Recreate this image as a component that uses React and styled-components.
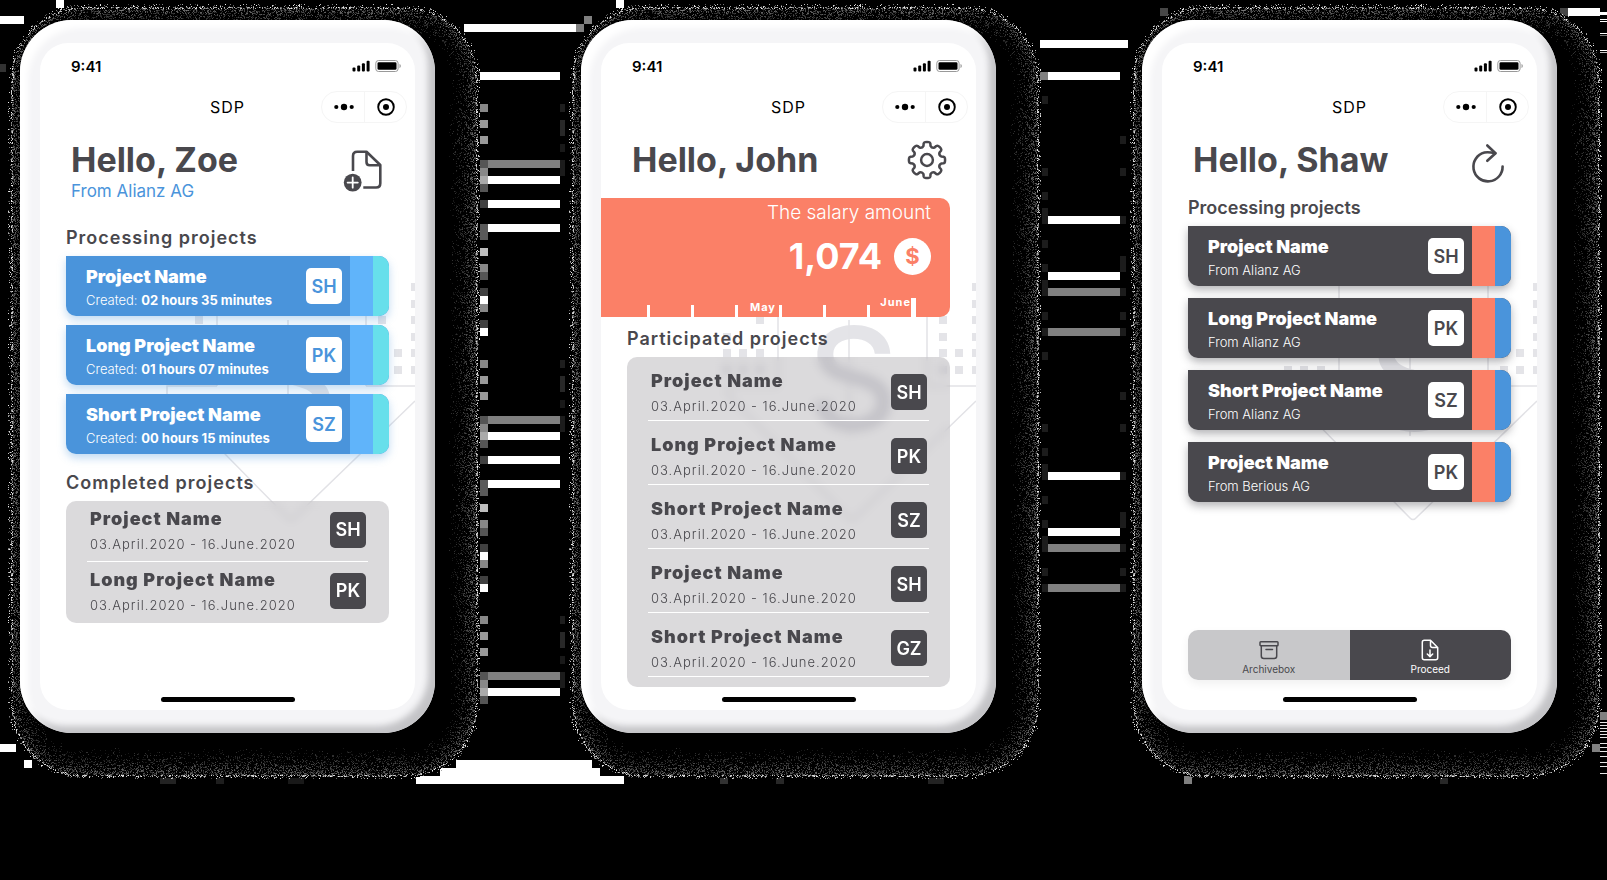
import React from "react";
import styled, { createGlobalStyle } from "styled-components";

const ink = "#49484d";
const blue = "#4a94db";
const coral = "#fb8067";

const GlobalStyle = createGlobalStyle`
  *, *::before, *::after { box-sizing: border-box; }
  html { background: #000; }
  body {
    margin: 0;
    min-height: 100vh;
    background: #000;
    color: ${ink};
    font-family: Inter, "Liberation Sans", sans-serif;
    -webkit-font-smoothing: antialiased;
  }
  h1, h2, h3, p, ul { margin: 0; padding: 0; }
  ul { list-style: none; }
  button { font: inherit; color: inherit; border: 0; padding: 0; background: none; cursor: pointer; }
  svg { display: block; }
`;

/* ---------- Page ---------- */

const Page = styled.main`
  position: relative;
  min-height: 100vh;
  overflow: hidden;
`;

const Backdrop = styled.svg`
  position: absolute;
  top: 0;
  left: 0;
  width: 100%;
  height: auto;
`;

const Phones = styled.div`
  position: relative;
  display: grid;
  grid-template-columns: repeat(3, 1fr);
  gap: 146px;
  padding: 20px 50px 40px 20px;
`;

const Frame = styled.section`
  padding: 23px 20px;
  border-radius: 52px;
  background: #f5f5f7;
  box-shadow: inset 8px 8px 6px #fff, inset -7px -7px 6px #c4c4c7;
`;

const Screen = styled.div`
  position: relative;
  display: flex;
  flex-direction: column;
  min-height: 667px;
  border-radius: 28px;
  background: #fff;
  overflow: hidden;
`;

const Watermark = styled.svg`
  position: absolute;
  top: 0;
  right: 0;
`;

/* ---------- Status and navigation ---------- */

const StatusBar = styled.div`
  display: flex;
  align-items: center;
  justify-content: space-between;
  height: 46px;
  padding: 0 13px 0 31px;
  color: #000;
  font-size: 15px;
  font-weight: 600;
`;

const NavBar = styled.div`
  display: grid;
  grid-template-columns: 1fr auto 1fr;
  align-items: center;
  height: 36px;
  padding: 0 8px;
  color: #000;
  font-size: 16px;
  letter-spacing: 1px;
`;

const Capsule = styled.div`
  grid-column: 3;
  justify-self: end;
  display: flex;
  width: 86px;
  height: 32px;
  border: 1px solid #f5f5f5;
  border-radius: 16px;
`;

const CapsuleButton = styled.button`
  flex: 1;
  display: grid;
  place-items: center;
  padding-left: 2px;
  & + & { border-left: 1px solid #f5f5f5; }
`;

const NavTitle = styled.p`
  grid-column: 2;
`;

const Header = styled.header`
  position: relative;
  display: flex;
  justify-content: space-between;
  align-items: flex-start;
  padding: 14px 27px 0 31px;
`;

const Greeting = styled.h1`
  font-size: 34px;
  line-height: 42px;
  font-weight: 700;
`;

const Company = styled.p`
  font-size: 17px;
  line-height: 20px;
  color: ${blue};
`;

const HeaderButton = styled.button`
  width: 44px;
  svg { overflow: visible; }
`;

const Content = styled.div`
  position: relative;
  flex: 1;
  display: flex;
  flex-direction: column;
  padding: ${(p) => p.$top}px 26px 0;
`;

const SectionTitle = styled.h2`
  margin-top: ${(p) => p.$space || 0}px;
  margin-bottom: 6px;
  font-size: 18px;
  line-height: 24px;
  font-weight: 600;
  letter-spacing: ${(p) => (p.$tracked ? 1 : 0)}px;
`;

const HomeIndicator = styled.div`
  align-self: center;
  width: 134px;
  height: 5px;
  margin: 10px 0 8px;
  border-radius: 3px;
  background: #000;
`;

/* ---------- Cards ---------- */

const CardList = styled.ul`
  display: grid;
  gap: ${(p) => p.$gap}px;
`;

const tones = {
  blue: { base: blue, first: "#60b4fa", second: "#67dfeb", shadow: "rgba(74,148,219,0.35)" },
  dark: { base: ink, first: coral, second: blue, shadow: "rgba(40,40,50,0.35)" },
};

const CardShell = styled.li`
  display: flex;
  align-items: center;
  height: 60px;
  padding-left: 20px;
  border-radius: 0 10px 10px 10px;
  overflow: hidden;
  background: ${(p) => tones[p.$tone].base};
  box-shadow: 0 4px 8px ${(p) => tones[p.$tone].shadow};
  color: #fff;
`;

const CardText = styled.div`
  flex: 1;
  display: grid;
  gap: 1px;
  padding-top: 2px;
`;

const CardTitle = styled.h3`
  font-size: 18px;
  line-height: 24px;
  font-weight: 900;
`;

const CardMeta = styled.p`
  font-size: 13px;
  line-height: 20px;
  font-weight: 300;
  strong { font-weight: 700; }
`;

const Badge = styled.span`
  display: grid;
  place-items: center;
  width: 36px;
  height: 36px;
  border-radius: 5px;
  font-size: 18px;
  font-weight: 600;
  background: ${(p) => (p.$tone ? "#fff" : ink)};
  color: ${(p) => (p.$tone ? tones[p.$tone].base : "#fff")};
`;

const Stripe = styled.span`
  align-self: stretch;
  width: ${(p) => p.$width}px;
  margin-left: ${(p) => p.$space || 0}px;
  background: ${(p) => p.$color};
`;

function ProjectCard({ tone, name, initials, children }) {
  return (
    <CardShell $tone={tone}>
      <CardText>
        <CardTitle>{name}</CardTitle>
        <CardMeta>{children}</CardMeta>
      </CardText>
      <Badge $tone={tone}>{initials}</Badge>
      <Stripe $width={23} $space={8} $color={tones[tone].first} />
      <Stripe $width={16} $color={tones[tone].second} />
    </CardShell>
  );
}

const Panel = styled.ul`
  padding: 0 21px ${(p) => (p.$roomy ? 10 : 0)}px;
  border-radius: 10px;
  background: rgba(73, 72, 80, 0.2);
  backdrop-filter: blur(4px);
`;

const PanelRow = styled.li`
  display: flex;
  align-items: center;
  justify-content: space-between;
  height: ${(p) => (p.$roomy ? 64 : 61)}px;
  padding: ${(p) => (p.$roomy ? "7px 2px 0 3px" : "0 2px 3px 3px")};
  border-bottom: 1px solid #fff;
  &:last-child { border-bottom-color: ${(p) => (p.$roomy ? "#fff" : "transparent")}; }
`;

const RowText = styled.div`
  display: grid;
  gap: 2px;
  padding-top: 2px;
`;

const RowTitle = styled.h3`
  font-size: 18px;
  line-height: 24px;
  font-weight: 900;
  letter-spacing: 1px;
`;

const RowDate = styled.p`
  font-size: 13px;
  line-height: 22px;
  font-weight: 300;
  letter-spacing: 1px;
`;

function ProjectPanel({ projects, roomy }) {
  return (
    <Panel $roomy={roomy}>
      {projects.map(([name, initials], i) => (
        <PanelRow key={i} $roomy={roomy}>
          <RowText>
            <RowTitle>{name}</RowTitle>
            <RowDate>03.April.2020 - 16.June.2020</RowDate>
          </RowText>
          <Badge>{initials}</Badge>
        </PanelRow>
      ))}
    </Panel>
  );
}

/* ---------- Salary ---------- */

const Salary = styled.section`
  position: relative;
  display: flex;
  flex-direction: column;
  align-items: flex-end;
  height: 119px;
  margin: 17px 26px 0 0;
  padding: 2px 19px 0 0;
  border-radius: 0 10px 10px 0;
  background: ${coral};
  color: #fff;
`;

const SalaryLabel = styled.h2`
  font-size: 19px;
  line-height: 26px;
  font-weight: 300;
`;

const SalaryAmount = styled.p`
  display: flex;
  align-items: center;
  gap: 12px;
  height: 40px;
  margin-top: 10px;
  font-size: 36px;
  font-weight: 700;
`;

const Coin = styled.span`
  display: grid;
  place-items: center;
  width: 37px;
  height: 37px;
  border-radius: 50%;
  background: #fff;
  color: ${coral};
  font-size: 22px;
  font-weight: 700;
`;

const Timeline = styled.div`
  display: flex;
  align-items: flex-end;
  margin-top: auto;
  margin-right: 15px;
`;

const Week = styled.div`
  display: flex;
  align-items: flex-end;
  justify-content: flex-end;
  gap: ${(p) => (p.$current ? 0 : 3)}px;
  width: ${(p) => (p.$current ? 46 : 44)}px;
`;

const Month = styled.span`
  padding-bottom: ${(p) => (p.$current ? 8 : 3)}px;
  font-size: 11px;
  line-height: 14px;
  font-weight: 700;
  letter-spacing: 1px;
`;

const Tick = styled.span`
  width: ${(p) => (p.$current ? 5 : 3)}px;
  height: ${(p) => (p.$current ? 19 : 12)}px;
  background: #fff;
`;

/* ---------- Bottom actions ---------- */

const Actions = styled.div`
  display: grid;
  grid-template-columns: 1fr 1fr;
  height: 50px;
  margin: auto 0 7px;
  border-radius: 10px;
  overflow: hidden;
  box-shadow: 0 4px 10px rgba(0, 0, 0, 0.06);
`;

const Action = styled.button`
  display: flex;
  flex-direction: column;
  align-items: center;
  gap: 2px;
  padding-top: 9px;
  background: ${(p) => (p.$primary ? ink : "#c8c8ca")};
  color: ${(p) => (p.$primary ? "#fff" : ink)};
  font-size: 10px;
  line-height: 12px;
`;

/* ---------- Icons ---------- */

const SignalIcon = () => (
  <svg width="50" height="12" viewBox="0 0 50 12" aria-hidden="true">
    <g fill="#000">
      <rect x="0.5" y="7.5" width="3" height="4" rx="1" />
      <rect x="5.2" y="5.5" width="3" height="6" rx="1" />
      <rect x="9.9" y="3.3" width="3" height="8.2" rx="1" />
      <rect x="14.6" y="0.8" width="3" height="10.7" rx="1" />
      <rect x="25.5" y="2.2" width="19" height="7.6" rx="1.3" />
    </g>
    <rect x="23.8" y="0.5" width="22.3" height="11" rx="2.7" fill="none" stroke="#999" />
    <path d="M47.5 4v4c.8-.3 1.3-1.1 1.3-2s-.5-1.7-1.3-2z" fill="#999" />
  </svg>
);

const DotsIcon = () => (
  <svg width="20" height="8" viewBox="0 0 20 8" aria-hidden="true">
    <circle cx="2.3" cy="4" r="2.1" />
    <circle cx="10" cy="4" r="3.2" />
    <circle cx="17.7" cy="4" r="2.1" />
  </svg>
);

const TargetIcon = () => (
  <svg width="18" height="18" viewBox="0 0 18 18" aria-hidden="true">
    <circle cx="9" cy="9" r="7.8" fill="none" stroke="#000" strokeWidth="1.9" />
    <circle cx="9" cy="9" r="3" />
  </svg>
);

const NewFileIcon = () => (
  <svg width="44" height="60" viewBox="0 0 44 60" fill="none" stroke={ink} strokeWidth="2.6" strokeLinejoin="round" aria-hidden="true">
    <path d="M9 32V17q0-4.200 4.200-4.200H22.500L36.300 26V44.300q0 4.200-4.200 4.200H19.300" />
    <path d="M22.500 12.800V23q0 3.200 3.200 3.200H36" />
    <circle cx="8.700" cy="43.600" r="8.900" fill={ink} stroke="none" />
    <path d="M8.700 38.500v10.200M3.600 43.600h10.200" stroke="#fff" strokeWidth="1.800" strokeLinecap="round" />
  </svg>
);

const gearOutline = (() => {
  const at = (r, deg) => {
    const a = (deg * Math.PI) / 180;
    return `${(22 + r * Math.cos(a)).toFixed(2)} ${(21 + r * Math.sin(a)).toFixed(2)}`;
  };
  let d = "";
  for (let k = 0; k < 8; k++) {
    const c = k * 45 - 90;
    d += `${k ? "L" : "M"}${at(14.6, c - 14)}L${at(16.8, c - 11.5)}Q${at(17.9, c - 10)} ${at(18, c - 6)}`;
    d += `Q${at(18.3, c)} ${at(18, c + 6)}Q${at(17.9, c + 10)} ${at(16.8, c + 11.5)}L${at(14.6, c + 14)}`;
    d += `Q${at(12.6, c + 22.5)} ${at(14.6, c + 31)}`;
  }
  return d + "Z";
})();

const GearIcon = () => (
  <svg width="44" height="42" viewBox="0 0 44 42" fill="none" stroke={ink} strokeWidth="2.5" strokeLinejoin="round" aria-hidden="true">
    <path d={gearOutline} />
    <circle cx="22" cy="21" r="5.900" />
  </svg>
);

const RefreshIcon = () => (
  <svg width="44" height="42" viewBox="0 0 44 42" fill="none" stroke={ink} strokeWidth="2.6" strokeLinecap="round" strokeLinejoin="round" aria-hidden="true">
    <path d="M36.600 27.500A14.600 14.600 0 1 1 18.500 13.600Q22 12.800 29.300 14.200" />
    <path d="M21.300 6.500L29.500 14.200L21.300 21.800" />
  </svg>
);

const ArchiveIcon = () => (
  <svg width="20" height="22" viewBox="0 0 20 22" fill="none" stroke="currentColor" strokeWidth="1.500" strokeLinejoin="round" strokeLinecap="round" aria-hidden="true">
    <rect x="1" y="2.800" width="18" height="4" rx="0.800" />
    <path d="M2.300 6.800V17q0 2.500 2.500 2.500H15.200q2.500 0 2.500-2.500V6.800M7 10.500h6.500" />
  </svg>
);

const ProceedIcon = () => (
  <svg width="20" height="22" viewBox="0 0 20 22" fill="none" stroke="currentColor" strokeWidth="1.500" strokeLinejoin="round" strokeLinecap="round" aria-hidden="true">
    <path d="M10.500 1.300H4.300Q2.300 1.300 2.300 3.300V18.700Q2.300 20.700 4.300 20.700H15.700Q17.700 20.700 17.700 18.700V8.500ZM10.500 1.300V6.500Q10.500 8.500 12.500 8.500H17.700M10 11v6M7.300 15L10 17.600L12.700 15" />
  </svg>
);

/* Faint banknote and dollar drawing behind the content. */
const marks = [
  [371, 240], [371, 257], [371, 273], [371, 290], [371, 306], [371, 323],
  [354, 306], [354, 323], [338, 273], [338, 290], [338, 306], [338, 323],
  [122, 290], [122, 306], [138, 306], [155, 306], [155, 273], [122, 323], [138, 323], [155, 323],
];

const BackgroundDrawing = () => (
  <Watermark width="375" height="667" viewBox="0 0 375 667" aria-hidden="true">
    <g fill="#e4e4e8">
      {marks.map(([x, y]) => (
        <rect key={`${x}-${y}`} x={x} y={y} width="8" height="8" />
      ))}
      <text x="252" y="387" textAnchor="middle" fontFamily="Inter, sans-serif" fontSize="142" fontWeight="500">S</text>
    </g>
    <path
      d="M177 240V343M326 240V343M248 277V393M127 352V343H177M326 343H375M127 352L247 474Q251 479 255 474L375 358"
      fill="none"
      stroke="#e2e2e6"
      strokeWidth="1.500"
    />
  </Watermark>
);

/* ---------- Pixel backdrop ---------- */

const seeded = (seed) => () => {
  seed = (seed * 1664525 + 1013904223) >>> 0;
  return seed / 4294967296;
};

// Speckles that thin out from the rim of the halo towards the phone.
const grain = (() => {
  const rnd = seeded(41);
  const buckets = {};
  const [x0, y0, x1, y1, r] = [8, 4, 480, 779, 74];
  for (let y = y0; y < y1; y++) {
    for (let x = x0; x < x1; x++) {
      if (x > 58 && x < 432 && y > 58 && y < 728) continue;
      const cx = Math.max(x0 + r - x, x - (x1 - r), 0);
      const cy = Math.max(y0 + r - y, y - (y1 - r), 0);
      const depth = cx && cy ? r - Math.hypot(cx, cy) : Math.min(x - x0, x1 - x, y - y0, y1 - y);
      if (depth < 0 || depth > 32) continue;
      const fade = 1 - depth / 32;
      if (rnd() > (depth < 3 ? 0.12 : 0.55 * fade)) continue;
      const peak = depth < 5 ? 240 : 40 + 110 * fade * fade;
      const level = Math.round((peak * (0.25 + 0.75 * rnd())) / 24) * 24;
      if (level > 0) buckets[level] = (buckets[level] || "") + `M${x} ${y}h1v1h-1z`;
    }
  }
  return Object.entries(buckets);
})();

const gray = (v) => `rgb(${v},${v},${v})`;

// x, y, width, height, grey level
const blocks = [
  [56, 0, 8, 8, 255], [0, 16, 24, 8, 255], [0, 64, 6, 8, 50], [0, 744, 16, 8, 255], [24, 760, 8, 8, 255],
  [464, 24, 112, 8, 255], [576, 24, 8, 8, 128], [584, 16, 8, 8, 128], [616, 0, 8, 8, 255],
  [480, 72, 80, 8, 255],
  [456, 760, 136, 8, 255], [440, 768, 160, 8, 255], [416, 776, 208, 8, 255],
  [1040, 40, 88, 8, 255], [1040, 72, 8, 8, 128], [1048, 72, 72, 8, 255],
  [1160, 8, 8, 8, 70], [1560, 8, 8, 8, 70], [1568, 8, 32, 8, 255],
  [1184, 776, 8, 8, 128], [1440, 776, 8, 8, 40], [1592, 744, 8, 8, 128], [1600, 712, 7, 8, 128],
  [160, 776, 16, 8, 35], [216, 776, 8, 8, 30], [288, 776, 16, 8, 25], [720, 776, 8, 8, 50], [776, 776, 8, 8, 40], [928, 776, 16, 8, 35],
  [1600, 12, 7, 3, 255], [1600, 19, 7, 1, 255], [1600, 21, 7, 1, 255], [1600, 33, 7, 1, 255], [1600, 35, 7, 1, 120], [1600, 50, 7, 1, 255], [1600, 52, 7, 1, 200],
  ...[722, 725, 728, 731, 734, 737, 743, 747, 751, 756, 762, 766, 773].map((y) => [1600, y, 7, 1, 230]),
];

[0, 256, 512].forEach((o) => {
  [[104, 136], [120, 153], [136, 153], [160, 85], [168, 136], [176, 170], [184, 85]].forEach(([y, v]) => {
    if (y + o < 712) blocks.push([480, y + o, 8, 8, v]);
  });
  blocks.push([488, 160 + o, 72, 8, 128], [488, 176 + o, 72, 8, 255]);
  [[104, 30], [120, 40], [128, 40], [144, 25], [160, 28], [168, 28]].forEach(([y, v]) => blocks.push([560, y + o, 5, 8, v]));
  if (o > 256) return;
  blocks.push([488, 200 + o, 72, 8, 255], [488, 224 + o, 72, 8, 255]);
  [[200, 64], [224, 90], [232, 90], [248, 190], [264, 136], [272, 85], [288, 64], [296, 255], [304, 136], [320, 64], [328, 255]].forEach(([y, v]) =>
    blocks.push([480, y + o, 8, 8, v])
  );
  blocks.push([1048, 216 + o, 72, 8, 255], [1048, 272 + o, 72, 8, 255], [1048, 288 + o, 72, 8, 128], [1048, 328 + o, 72, 8, 128]);
  [96, 168, 192, 208, 216, 240, 264, 280, 288, 312, 328].forEach((y) => blocks.push([1042, y + o, 6, 8, 28]));
  [136, 168, 216, 256, 264, 288, 312, 328].forEach((y) => blocks.push([1120, y + o, 6, 8, 28]));
});

const PixelBackdrop = () => (
  <Backdrop viewBox="0 0 1607 880" shapeRendering="crispEdges" aria-hidden="true">
    {blocks.map(([x, y, w, h, v], i) => (
      <rect key={i} x={x} y={y} width={w} height={h} fill={gray(v)} />
    ))}
    {[0, 561, 1122].map((shift) => (
      <g key={shift} transform={`translate(${shift} 0)`}>
        <rect x="9" y="5" width="470" height="773" rx="74" fill="#000" />
        {grain.map(([level, d]) => (
          <path key={level} d={d} fill={gray(level)} />
        ))}
      </g>
    ))}
  </Backdrop>
);

/* ---------- Composition ---------- */

function Phone({ name, company, actionLabel, icon, children }) {
  return (
    <Frame aria-label={`${name}'s screen`}>
      <Screen>
        <BackgroundDrawing />
        <StatusBar>
          <time>9:41</time>
          <SignalIcon />
        </StatusBar>
        <NavBar>
          <NavTitle>SDP</NavTitle>
          <Capsule>
            <CapsuleButton aria-label="More"><DotsIcon /></CapsuleButton>
            <CapsuleButton aria-label="Close"><TargetIcon /></CapsuleButton>
          </Capsule>
        </NavBar>
        <Header>
          <div>
            <Greeting>Hello, {name}</Greeting>
            {company && <Company>From {company}</Company>}
          </div>
          <HeaderButton aria-label={actionLabel}>{icon}</HeaderButton>
        </Header>
        {children}
        <HomeIndicator />
      </Screen>
    </Frame>
  );
}

const P = "Project Name";
const L = "Long Project Name";
const S = "Short Project Name";

export default function App() {
  return (
    <Page>
      <GlobalStyle />
      <PixelBackdrop />
      <Phones>
        <Phone name="Zoe" company="Alianz AG" actionLabel="New project" icon={<NewFileIcon />}>
          <Content $top={25}>
            <SectionTitle $tracked>Processing projects</SectionTitle>
            <CardList $gap={9}>
              <ProjectCard tone="blue" name={P} initials="SH">Created: <strong>02 hours 35 minutes</strong></ProjectCard>
              <ProjectCard tone="blue" name={L} initials="PK">Created: <strong>01 hours 07 minutes</strong></ProjectCard>
              <ProjectCard tone="blue" name={S} initials="SZ">Created: <strong>00 hours 15 minutes</strong></ProjectCard>
            </CardList>
            <SectionTitle $tracked $space={17}>Completed projects</SectionTitle>
            <ProjectPanel projects={[[P, "SH"], [L, "PK"]]} />
          </Content>
        </Phone>

        <Phone name="John" actionLabel="Settings" icon={<GearIcon />}>
          <Salary>
            <SalaryLabel>The salary amount</SalaryLabel>
            <SalaryAmount>1,074 <Coin>$</Coin></SalaryAmount>
            <Timeline>
              {["", "", "", "May", "", "", "June"].map((month, i) => (
                <Week key={i} $current={i === 6}>
                  {month && <Month $current={i === 6}>{month}</Month>}
                  <Tick $current={i === 6} />
                </Week>
              ))}
            </Timeline>
          </Salary>
          <Content $top={10}>
            <SectionTitle $tracked>Participated projects</SectionTitle>
            <ProjectPanel roomy projects={[[P, "SH"], [L, "PK"], [S, "SZ"], [P, "SH"], [S, "GZ"]]} />
          </Content>
        </Phone>

        <Phone name="Shaw" actionLabel="Refresh" icon={<RefreshIcon />}>
          <Content $top={15}>
            <SectionTitle>Processing projects</SectionTitle>
            <CardList $gap={12}>
              <ProjectCard tone="dark" name={P} initials="SH">From Alianz AG</ProjectCard>
              <ProjectCard tone="dark" name={L} initials="PK">From Alianz AG</ProjectCard>
              <ProjectCard tone="dark" name={S} initials="SZ">From Alianz AG</ProjectCard>
              <ProjectCard tone="dark" name={P} initials="PK">From Berious AG</ProjectCard>
            </CardList>
            <Actions>
              <Action><ArchiveIcon />Archivebox</Action>
              <Action $primary><ProceedIcon />Proceed</Action>
            </Actions>
          </Content>
        </Phone>
      </Phones>
    </Page>
  );
}
